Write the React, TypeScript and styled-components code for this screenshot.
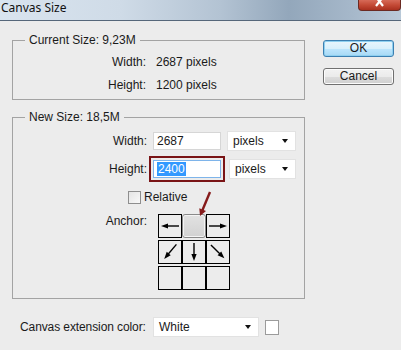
import React from 'react'
import styled, { createGlobalStyle } from 'styled-components'

const GlobalStyle = createGlobalStyle`
    html, body {
        margin: 0;
        padding: 0;
        background: #ececec;
    }
    * {
        box-sizing: border-box;
    }
`

const uiFont = `"Liberation Sans", Arial, sans-serif`

const Window = styled.div`
    width: 401px;
    height: 350px;
    overflow: hidden;
    background: #ececec;
    font-family: ${uiFont};
    font-size: 12px;
    color: #1a1a1a;
    display: flex;
    flex-direction: column;
`

const TitleBar = styled.div`
    height: 21px;
    flex: none;
    display: flex;
    align-items: flex-start;
    background: linear-gradient(to right, #d9e4ef 0%, #cfdbe7 30%, #b3c3d3 55%, #93a7bb 72%, #a6b8ca 88%, #b9c9d8 100%);
    border-bottom: 1px solid #56677a;
`

const Title = styled.span`
    font-family: "Noto Sans", ${uiFont};
    font-size: 12px;
    line-height: 16px;
    padding-left: 1px;
    color: #111;
`

const CloseButton = styled.div`
    margin-left: auto;
    width: 43px;
    height: 11px;
    border: 1px solid #6b2a22;
    border-top: none;
    border-radius: 0 0 4px 4px;
    background: linear-gradient(to bottom, #d66a58 0%, #c44a36 50%, #a9301f 100%);
    display: flex;
    justify-content: center;
`

const Body = styled.div`
    flex: 1;
    display: flex;
    padding: 12px 0 0 12px;
`

const LeftColumn = styled.div`
    width: 293px;
    display: flex;
    flex-direction: column;
    gap: 10px;
`

const RightColumn = styled.div`
    display: flex;
    flex-direction: column;
    gap: 11px;
    padding: 7px 0 0 18px;
`

const Group = styled.fieldset`
    position: relative;
    margin: 0;
    width: 293px;
    border: 1px solid #a3a3a3;
    padding: 0;
    min-inline-size: 0;
`

const Legend = styled.legend`
    margin-left: 12px;
    padding: 0 4px;
    line-height: 14px;
`

const InfoRows = styled.div`
    display: grid;
    grid-template-columns: 133px auto;
    column-gap: 10px;
    row-gap: 9px;
    padding: 8px 0 7px;
    line-height: 14px;
`

const Label = styled.span`
    text-align: right;
    white-space: nowrap;
`

const FormGrid = styled.div`
    display: grid;
    grid-template-columns: 134px 68px auto;
    column-gap: 6px;
    row-gap: 8px;
    align-items: center;
    padding: 7px 0 0;
`

const TextBox = styled.div<{ $focused?: boolean }>`
    height: 18px;
    background: #fff;
    border: 1px solid ${p => (p.$focused ? '#7eb4ea' : '#d6d6d6')};
    padding-left: 3px;
    line-height: 16px;
    outline: ${p => (p.$focused ? '2px solid #7a1416' : 'none')};
    outline-offset: 2px;
`

const Selection = styled.span`
    background: #3399ff;
    color: #fff;
    padding: 0 1px;
`

const Select = styled.div<{ $width: number; $shift?: number }>`
    width: ${p => p.$width}px;
    height: 20px;
    margin-left: ${p => p.$shift ?? 0}px;
    background: #fff;
    border: 1px solid #e2e2e2;
    display: flex;
    align-items: center;
    padding: 0 7px 0 5px;
    justify-content: space-between;
`

const Caret = styled.span`
    width: 0;
    height: 0;
    border-left: 3.5px solid transparent;
    border-right: 3.5px solid transparent;
    border-top: 4px solid #111;
`

const RelativeRow = styled.label`
    display: flex;
    align-items: center;
    gap: 3px;
    margin: 11px 0 0 115px;
    line-height: 14px;
`

const CheckBox = styled.span<{ $size: number }>`
    width: ${p => p.$size}px;
    height: ${p => p.$size}px;
    background: linear-gradient(135deg, #e4e4e4 0%, #f8f8f8 100%);
    border: 1px solid #8e8e8e;
    flex: none;
`

const AnchorRow = styled.div`
    display: grid;
    grid-template-columns: 134px auto;
    column-gap: 11px;
    align-items: start;
    padding: 10px 0 8px;
    line-height: 14px;
`

const AnchorWrap = styled.div`
    position: relative;
    width: 72px;
`

const AnchorGrid = styled.div`
    display: grid;
    grid-template-columns: repeat(3, 24px);
    grid-template-rows: repeat(3, 24px);
    row-gap: 2px;
`

const Cell = styled.div<{ $active?: boolean }>`
    display: flex;
    align-items: center;
    justify-content: center;
    border: 1px solid #000;
    background: #ececec;
    ${p =>
        p.$active &&
        `
        border: 1px solid #8a8a8a;
        border-radius: 3px;
        background: linear-gradient(to bottom, #e2e2e2 0%, #d2d2d2 100%);
        box-shadow: inset 0 0 0 1px #f4f4f4;
    `}
`

const Annotation = styled.svg`
    position: absolute;
    left: 36px;
    top: -25px;
    overflow: visible;
`

const ExtensionRow = styled.div`
    display: flex;
    align-items: center;
    margin: 8px 0 0 8px;
    gap: 6px;
`

const ExtLabel = styled.span`
    width: 127px;
    flex: none;
    white-space: nowrap;
    letter-spacing: -0.1px;
`

const Swatch = styled.span`
    width: 14px;
    height: 15px;
    background: #fff;
    border: 1px solid #9b9b9b;
`

const Button = styled.div<{ $primary?: boolean }>`
    width: 71px;
    height: 17px;
    border-radius: 3px;
    display: flex;
    align-items: center;
    justify-content: center;
    line-height: 15px;
    border: 1px solid ${p => (p.$primary ? '#3c7fb1' : '#707070')};
    background: ${p =>
        p.$primary
            ? 'linear-gradient(to bottom, #e9f6fd 0%, #d9f0fc 50%, #bee6fd 51%, #a7d9f5 100%)'
            : 'linear-gradient(to bottom, #f2f2f2 0%, #ebebeb 50%, #dddddd 51%, #cfcfcf 100%)'};
    box-shadow: ${p => (p.$primary ? 'inset 0 0 0 1px #8fd0f0' : 'inset 0 0 0 1px #fcfcfc')};
`

const angles: Record<string, number> = {
    left: 180,
    right: 0,
    down: 90,
    downLeft: 130,
    downRight: 45,
}

// arrow drawn pointing right, then turned
const Arrow = ({ dir }: { dir: string }) => {
    const diagonal = dir === 'downLeft' || dir === 'downRight'
    const start = diagonal ? 1 : 2
    const tip = diagonal ? 20 : 20
    return (
        <svg width="22" height="22" viewBox="0 0 22 22" style={{ overflow: 'visible' }}>
            <g transform={`rotate(${angles[dir]} 11 11)`}>
                <line x1={start} y1="11" x2={tip - 5} y2="11" stroke="#000" strokeWidth="1.4" />
                <polygon points={`${tip - 7},8.4 ${tip},11 ${tip - 7},13.6`} fill="#000" />
            </g>
        </svg>
    )
}

const anchorCells = [
    { dir: 'left' },
    { active: true },
    { dir: 'right' },
    { dir: 'downLeft' },
    { dir: 'down' },
    { dir: 'downRight' },
    {},
    {},
    {},
] as { dir?: string; active?: boolean }[]

const App = () => {
    return (
        <Window>
            <GlobalStyle />
            <TitleBar>
                <Title>Canvas Size</Title>
                <CloseButton>
                    <svg width="14" height="10" viewBox="0 0 14 10">
                        <path d="M3 -3 L10 6 M10 -3 L3 6" stroke="#fff" strokeWidth="2.2" />
                    </svg>
                </CloseButton>
            </TitleBar>
            <Body>
                <LeftColumn>
                    <Group>
                        <Legend>Current Size: 9,23M</Legend>
                        <InfoRows>
                            <Label>Width:</Label>
                            <span>2687 pixels</span>
                            <Label>Height:</Label>
                            <span>1200 pixels</span>
                        </InfoRows>
                    </Group>
                    <Group>
                        <Legend>New Size: 18,5M</Legend>
                        <FormGrid>
                            <Label>Width:</Label>
                            <TextBox>2687</TextBox>
                            <Select $width={69}>
                                pixels <Caret />
                            </Select>
                            <Label>Height:</Label>
                            <TextBox $focused>
                                <Selection>2400</Selection>
                            </TextBox>
                            <Select $width={67} $shift={2}>
                                pixels <Caret />
                            </Select>
                        </FormGrid>
                        <RelativeRow>
                            <CheckBox $size={13} />
                            Relative
                        </RelativeRow>
                        <AnchorRow>
                            <Label>Anchor:</Label>
                            <AnchorWrap>
                                <AnchorGrid>
                                    {anchorCells.map((c, i) => (
                                        <Cell key={i} $active={c.active}>
                                            {c.dir && <Arrow dir={c.dir} />}
                                        </Cell>
                                    ))}
                                </AnchorGrid>
                                <Annotation width="20" height="30" viewBox="0 0 20 30">
                                    <line x1="16" y1="3" x2="8.4" y2="21.3" stroke="#861b1b" strokeWidth="2.4" />
                                    <polygon points="6,27 12,21.9 5.3,19.2" fill="#861b1b" />
                                </Annotation>
                            </AnchorWrap>
                        </AnchorRow>
                    </Group>
                    <ExtensionRow>
                        <ExtLabel>Canvas extension color:</ExtLabel>
                        <Select $width={106}>
                            White <Caret />
                        </Select>
                        <Swatch />
                    </ExtensionRow>
                </LeftColumn>
                <RightColumn>
                    <Button $primary>OK</Button>
                    <Button>Cancel</Button>
                </RightColumn>
            </Body>
        </Window>
    )
}

export default App
